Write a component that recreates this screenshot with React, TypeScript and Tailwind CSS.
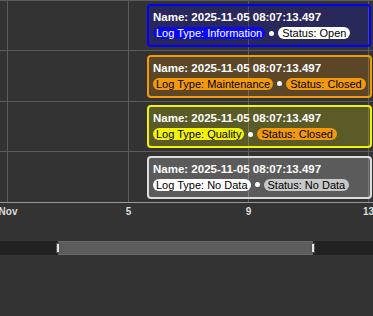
import React from 'react';

interface LogItem {
  id: number;
  width: number;
  border: string;
  bg: string;
  typeLabel: string;
  typeClass: string;
  statusLabel: string;
  statusClass: string;
}

const items: LogItem[] = [
  {
    id: 1,
    width: 224,
    border: 'border-[#0000ff]',
    bg: 'bg-[rgba(0,0,255,0.2)]',
    typeLabel: 'Log Type: Information',
    typeClass: 'bg-[#0a0af0] text-white',
    statusLabel: 'Status: Open',
    statusClass: 'bg-white text-black',
  },
  {
    id: 2,
    width: 225,
    border: 'border-[#f39a0a]',
    bg: 'bg-[rgba(255,153,0,0.2)]',
    typeLabel: 'Log Type: Maintenance',
    typeClass: 'bg-[#f29a0c] text-black',
    statusLabel: 'Status: Closed',
    statusClass: 'bg-[#f29a0c] text-black',
  },
  {
    id: 3,
    width: 225,
    border: 'border-[#f2f20a]',
    bg: 'bg-[rgba(255,255,0,0.2)]',
    typeLabel: 'Log Type: Quality',
    typeClass: 'bg-[#f2f20a] text-black',
    statusLabel: 'Status: Closed',
    statusClass: 'bg-[#f29a0c] text-black',
  },
  {
    id: 4,
    width: 225,
    border: 'border-[#dddddd]',
    bg: 'bg-[rgba(255,255,255,0.2)]',
    typeLabel: 'Log Type: No Data',
    typeClass: 'bg-white text-black',
    statusLabel: 'Status: No Data',
    statusClass: 'bg-[#c8c8c8] text-black',
  },
];

// x positions of the day ticks on the time axis
const ticks = [
  { x: 7, label: 'Nov' },
  { x: 128, label: '5' },
  { x: 248, label: '9' },
  { x: 368, label: '13' },
];

const LogCard: React.FC<{ item: LogItem }> = ({ item }) => (
  <div
    className={`h-[43px] shrink-0 rounded-[4px] border-2 px-[4px] pt-[4px] ${item.border} ${item.bg}`}
    style={{ width: item.width }}
  >
    <div className="whitespace-nowrap text-[11.5px] font-bold leading-[14px] text-white">
      Name: 2025-11-05 08:07:13.497
    </div>
    <div className="mt-[3px] flex items-center whitespace-nowrap">
      <span className={`rounded-full px-[3px] text-[11px] leading-[12px] ${item.typeClass}`}>
        {item.typeLabel}
      </span>
      <span className="mx-[4px] h-[5px] w-[5px] rounded-full bg-white" />
      <span className={`rounded-full px-[4px] text-[11px] leading-[12px] ${item.statusClass}`}>
        {item.statusLabel}
      </span>
    </div>
  </div>
);

export default function App() {
  return (
    <div className="h-[316px] w-[373px] overflow-hidden bg-[#333333] font-['Liberation_Sans',Arial,sans-serif]">
      {/* timeline area */}
      <div className="relative h-[203px] overflow-hidden">
        <svg className="absolute inset-0" width="373" height="203">
          {[0.5, 50.5, 101.5, 151.5].map((y) => (
            <line key={y} x1="0" x2="373" y1={y} y2={y} stroke="#5c5c5c" strokeWidth="1" />
          ))}
          {ticks.map((t) => (
            <line key={t.x} x1={t.x + 0.5} x2={t.x + 0.5} y1="0" y2="202" stroke="#5c5c5c" strokeWidth="1" />
          ))}
          <line x1="0" x2="373" y1="202.5" y2="202.5" stroke="#9a9a9a" strokeWidth="1" />
        </svg>
        <div className="relative flex flex-col gap-[7.5px] pl-[147px] pt-[4px]">
          {items.map((item) => (
            <LogCard key={item.id} item={item} />
          ))}
        </div>
      </div>

      {/* axis labels */}
      <div className="relative h-[38px]">
        {ticks.map((t) => (
          <span
            key={t.x}
            className="absolute top-[3px] -translate-x-1/2 text-[10px] font-bold leading-[12px] text-[#dddddd]"
            style={{ left: t.label === 'Nov' ? 8 : t.x + 0.5 }}
          >
            {t.label}
          </span>
        ))}
      </div>

      {/* range scrollbar */}
      <div className="flex h-[14px] items-center bg-[#222222]">
        <div className="relative ml-[58px] h-[14px] w-[255px] border-y border-[#6a6a6a] bg-[#5c5c5c]">
          <span className="absolute -left-[2px] top-[1px] h-[10px] w-[4px] rounded-[1px] border border-[#555] bg-[#e6e6e6]" />
          <span className="absolute -right-[2px] top-[1px] h-[10px] w-[4px] rounded-[1px] border border-[#555] bg-[#e6e6e6]" />
        </div>
      </div>
    </div>
  );
}
